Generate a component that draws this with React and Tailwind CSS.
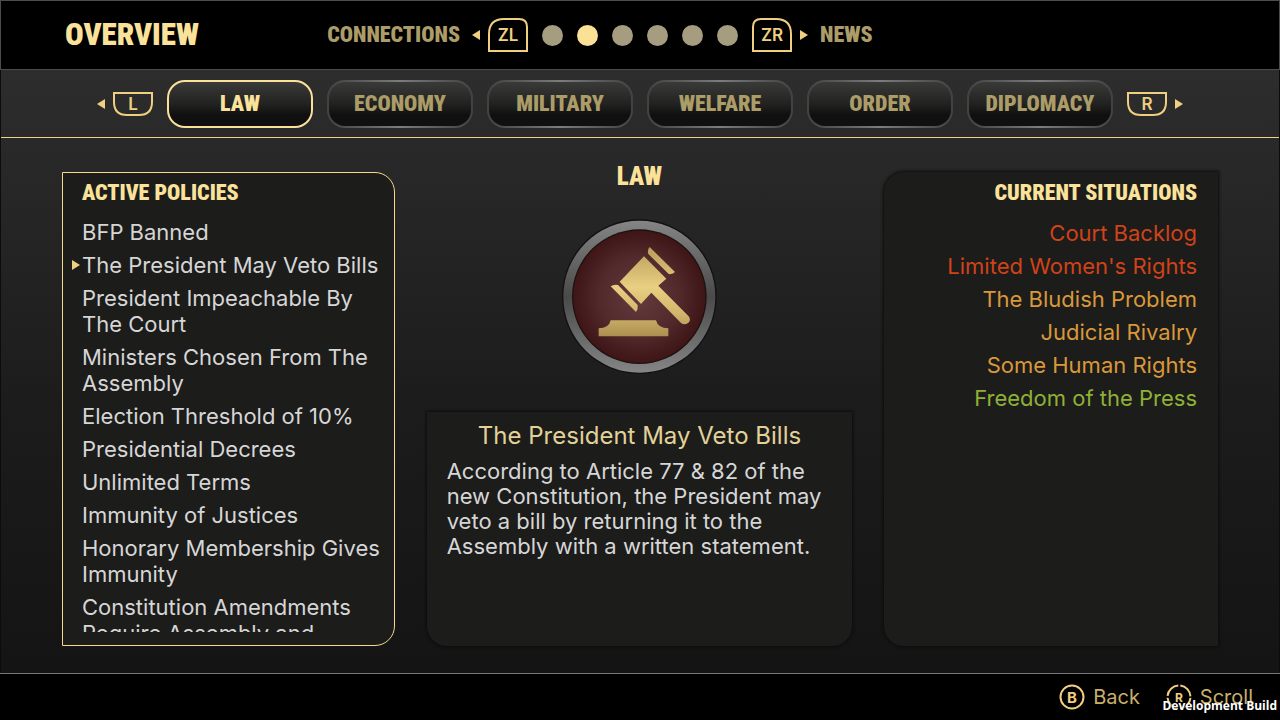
import React, { useState } from 'react'
import clsx from 'clsx'

const tabs = ['Law', 'Economy', 'Military', 'Welfare', 'Order', 'Diplomacy']

const policies = [
  'BFP Banned',
  'The President May Veto Bills',
  'President Impeachable By The Court',
  'Ministers Chosen From The Assembly',
  'Election Threshold of 10%',
  'Presidential Decrees',
  'Unlimited Terms',
  'Immunity of Justices',
  'Honorary Membership Gives Immunity',
  'Constitution Amendments Require Assembly and',
]

const situations = [
  { name: 'Court Backlog', color: 'text-[#d04218]' },
  { name: "Limited Women's Rights", color: 'text-[#d04218]' },
  { name: 'The Bludish Problem', color: 'text-[#d9983a]' },
  { name: 'Judicial Rivalry', color: 'text-[#d9983a]' },
  { name: 'Some Human Rights', color: 'text-[#d9983a]' },
  { name: 'Freedom of the Press', color: 'text-[#8fb136]' },
]

const display = "font-['Roboto_Condensed','Open_Sans_Condensed','Roboto',sans-serif] font-black uppercase"

function Arrow({ left, className }) {
  return (
    <svg viewBox="0 0 8 10" className={clsx('h-[10px] w-2 shrink-0', className)} fill="#f0cf80" aria-hidden="true">
      {left ? <path d="M8 0v10L0 5z" /> : <path d="M0 0v10l8-5z" />}
    </svg>
  )
}

function Shoulder({ label, d, className }) {
  return (
    <button className="relative flex shrink-0 items-center justify-center text-[#f0cf80]" aria-label={label}>
      <svg className={className} fill="none" stroke="currentColor" strokeWidth="2" aria-hidden="true">
        <path d={d} />
      </svg>
      <span className="absolute pt-px text-[17px] leading-none font-semibold">{label}</span>
    </button>
  )
}

function Medal() {
  return (
    <svg viewBox="28 182 480 480" className="mt-6 h-40 w-40 shrink-0" aria-hidden="true">
      <defs>
        <linearGradient id="ring" x1="0" y1="0" x2="0" y2="1">
          <stop offset="0" stopColor="#858585" />
          <stop offset="0.5" stopColor="#4a4a4a" />
          <stop offset="1" stopColor="#858585" />
        </linearGradient>
        <radialGradient id="felt">
          <stop offset="0" stopColor="#653a3d" />
          <stop offset="0.6" stopColor="#512a2c" />
          <stop offset="1" stopColor="#3f1516" />
        </radialGradient>
        <linearGradient id="gold" gradientUnits="userSpaceOnUse" x1="0" y1="275" x2="0" y2="543">
          <stop offset="0" stopColor="#b79c5c" />
          <stop offset="0.45" stopColor="#e9cf81" />
          <stop offset="0.75" stopColor="#d0b56c" />
          <stop offset="1" stopColor="#ab8f50" />
        </linearGradient>
      </defs>
      <circle cx="269" cy="424" r="232" fill="#111" />
      <circle cx="269" cy="424" r="228" fill="url(#ring)" />
      <circle cx="269" cy="424" r="202" fill="#1d1212" />
      <circle cx="269" cy="424" r="198" fill="url(#felt)" />
      <g fill="url(#gold)">
        <path d="M300 275l76 75q-7 7-18 7l-62-61q-4-12 4-21z" />
        <path d="M283 303l67 67-24 21 91 92q7 10 1 18-11 10-24 2l-89-91-31 34-64-67z" />
        <path d="M183 393q9-7 22-4l59 60q2 12-5 21z" />
        <path d="M183 495h136q5 23 37 24v24H147v-24q31 0 36-24z" />
      </g>
    </svg>
  )
}

export default function App() {
  const [tab, setTab] = useState('Law')
  const [policy, setPolicy] = useState(policies[1])

  return (
    <div className="relative flex h-screen flex-col overflow-hidden bg-black font-['Inter',sans-serif] text-[#d6d6d6]">
      <header className="grid h-[70px] shrink-0 grid-cols-[1fr_auto_1fr] items-center gap-[14px] border border-[#4c4c4c]">
        <div className="flex items-center pl-16">
          <h1 className={clsx(display, 'text-[31px] leading-9 text-[#fae29b]')}>Overview</h1>
          <a href="#connections" className={clsx(display, 'ml-auto text-[22px] leading-7 text-[#ab9c68]')}>Connections</a>
          <Arrow left className="mr-2 ml-3" />
          <Shoulder label="ZL" className="h-[34px] w-10" d="M1 33V16Q1 1 16 1H31Q39 1 39 9V33Z" />
        </div>
        <div className="flex gap-[14px]">
          {[0, 1, 2, 3, 4, 5].map((i) => (
            <span key={i} className={clsx('h-[21px] w-[21px] rounded-full', i === 1 ? 'bg-[#fbe196]' : 'bg-[#a69c80]')} />
          ))}
        </div>
        <div className="flex items-center">
          <Shoulder label="ZR" className="h-[34px] w-10" d="M1 33V9Q1 1 9 1H24Q39 1 39 16V33Z" />
          <Arrow className="mr-3 ml-2" />
          <a href="#news" className={clsx(display, 'text-[22px] leading-7 text-[#ab9c68]')}>News</a>
        </div>
      </header>

      <div className="flex min-h-0 flex-1 flex-col border-x border-[#0c0c0c] bg-linear-to-b from-[#2d2d2d] via-[#1c1c1c] via-55% to-[#141414]">
        <nav className="flex h-[68px] shrink-0 items-center justify-center gap-[14px] border-b border-[#f0cf90]">
          <div className="flex items-center gap-2">
            <Arrow left />
            <Shoulder label="L" className="h-6 w-10" d="M1 1H39V10Q39 23 26 23H14Q1 23 1 10Z" />
          </div>
          {tabs.map((name) => (
            <button
              key={name}
              onClick={() => setTab(name)}
              className={clsx(
                'h-12 max-w-[146px] flex-1 rounded-[18px]',
                tab === name ? 'bg-[#fae29b] p-[2px]' : 'bg-linear-to-r from-[#424242] via-[#7c7c7c] to-[#424242] p-[2px]'
              )}
            >
              <span
                className={clsx(
                  display,
                  'flex h-full items-center justify-center rounded-[16px] bg-linear-to-b from-[#3a3a38] via-[#222221] to-[#101010] to-75% text-[22px] leading-7',
                  tab === name ? 'text-[#fae29b]' : 'text-[#ab9c68]'
                )}
              >
                {name}
              </span>
            </button>
          ))}
          <div className="flex items-center gap-2">
            <Shoulder label="R" className="h-6 w-10" d="M1 1H39V10Q39 23 26 23H14Q1 23 1 10Z" />
            <Arrow />
          </div>
        </nav>

        <main className="grid min-h-0 flex-1 grid-cols-[333fr_426fr_334fr] gap-8 px-[61px] pt-6 pb-[27px]">
          <section className="mt-[10px] flex min-h-0 flex-col rounded-r-[20px] border border-[#f3da90] bg-[#1c1c1b] pt-[6px] pb-[13px]">
            <h2 className={clsx(display, 'pl-[19px] text-[22px] leading-7 text-[#fae29b]')}>Active Policies</h2>
            <ul className="mt-3 flex min-h-0 flex-col gap-[7px] overflow-hidden">
              {policies.map((p) => (
                <li key={p} className="shrink-0">
                  <button
                    onClick={() => setPolicy(p)}
                    className="relative block w-full pr-3 pl-[19px] text-left text-[22px] leading-[26px]"
                  >
                    {policy === p && <Arrow className="absolute top-2 left-[9px]" />}
                    {p}
                  </button>
                </li>
              ))}
            </ul>
          </section>

          <section className="flex min-h-0 flex-col items-center">
            <h2 className={clsx(display, 'text-[25px] leading-[30px] text-[#fae29b]')}>{tab}</h2>
            <Medal />
            <div className="mt-9 w-full flex-1 rounded-b-[20px] bg-[#1c1c1b] px-5 pt-2 shadow-[0_0_3px_1px_#0c0c0c]">
              <h3 className="text-center text-[24px] leading-8 text-[#e2d29a]">{policy}</h3>
              <p className="mt-[7px] text-[22px] leading-[25px]">
                According to Article 77 & 82 of the new Constitution, the President may veto a bill by returning it to the Assembly with a written statement.
              </p>
            </div>
          </section>

          <section className="mt-[10px] min-h-0 rounded-l-[20px] bg-[#1c1c1b] pt-[7px] pr-[21px] text-right shadow-[0_0_3px_1px_#0c0c0c]">
            <h2 className={clsx(display, 'text-[22px] leading-7 text-[#fae29b]')}>Current Situations</h2>
            <ul className="mt-[13px] flex flex-col gap-[7px] text-[22px] leading-[26px]">
              {situations.map((s) => (
                <li key={s.name} className={s.color}>{s.name}</li>
              ))}
            </ul>
          </section>
        </main>
      </div>

      <footer className="flex h-[47px] shrink-0 items-center justify-end gap-[26px] border-t border-[#777] pr-[27px] text-[20px] text-[#c9af6b]">
        <button className="flex items-center gap-2">
          <svg viewBox="0 0 26 26" className="h-[26px] w-[26px]" fill="none" stroke="#f0cf80" strokeWidth="2" aria-hidden="true">
            <circle cx="13" cy="13" r="11.5" />
            <text x="13" y="18.5" textAnchor="middle" fontSize="15" fontWeight="700" fill="#f0cf80" stroke="none">B</text>
          </svg>
          Back
        </button>
        <button className="flex items-center gap-2">
          <svg viewBox="0 0 26 26" className="h-[26px] w-[26px]" fill="none" stroke="#f0cf80" strokeWidth="2" aria-hidden="true">
            <circle cx="13" cy="13" r="11.5" strokeDasharray="16 2.06" strokeDashoffset="-1" />
            <text x="13" y="17.5" textAnchor="middle" fontSize="12" fontWeight="700" fill="#f0cf80" stroke="none">R</text>
          </svg>
          Scroll
        </button>
      </footer>
      <div className="absolute right-[3px] bottom-[6px] font-['Open_Sans',sans-serif] text-[12px] leading-4 font-bold text-white [text-shadow:1px_1px_1px_#000]">
        Development Build
      </div>
    </div>
  )
}
